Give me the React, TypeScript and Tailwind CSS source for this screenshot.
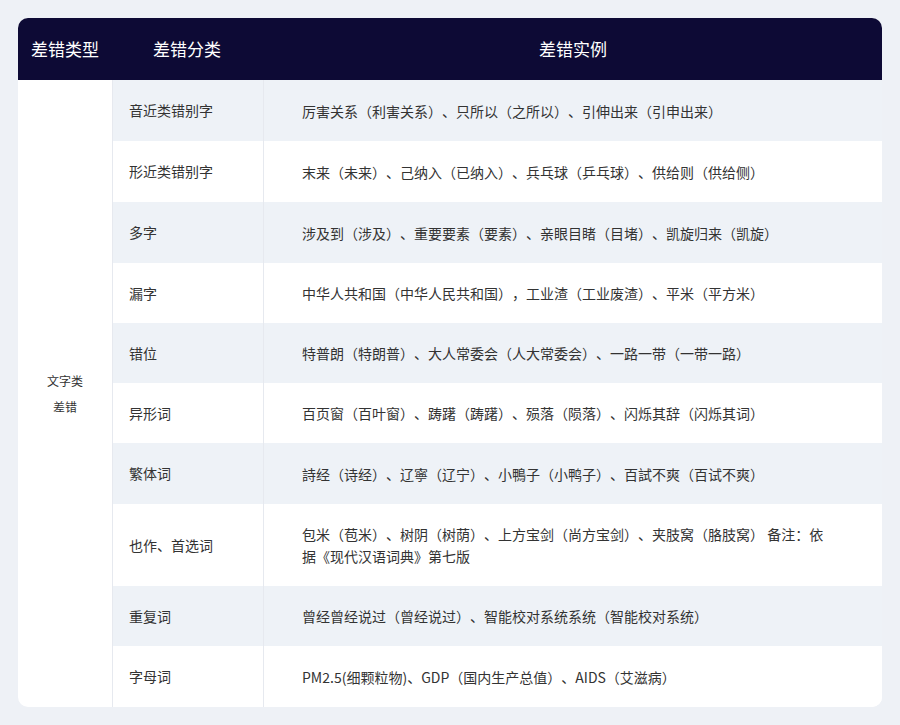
const rows: [string, string, string][] = [
  ["音近类错别字", "厉害关系（利害关系）、只所以（之所以）、引伸出来（引申出来）", "h-[61px]"],
  ["形近类错别字", "末来（未来）、己纳入（已纳入）、兵乓球（乒乓球）、供给则（供给侧）", "h-[61px]"],
  ["多字", "涉及到（涉及）、重要要素（要素）、亲眼目睹（目堵）、凯旋归来（凯旋）", "h-[61px]"],
  ["漏字", "中华人共和国（中华人民共和国），工业渣（工业废渣）、平米（平方米）", "h-[60px]"],
  ["错位", "特普朗（特朗普）、大人常委会（人大常委会）、一路一带（一带一路）", "h-[60px]"],
  ["异形词", "百页窗（百叶窗）、踌躇（踌躇）、殒落（陨落）、闪烁其辞（闪烁其词）", "h-[60px]"],
  ["繁体词", "詩经（诗经）、辽寧（辽宁）、小鴨子（小鸭子）、百試不爽（百试不爽）", "h-[61px]"],
  ["也作、首选词", "包米（苞米）、树阴（树荫）、上方宝剑（尚方宝剑）、夹肢窝（胳肢窝） 备注：依据《现代汉语词典》第七版", "h-[82px]"],
  ["重复词", "曾经曾经说过（曾经说过）、智能校对系统系统（智能校对系统）", "h-[60px]"],
  ["字母词", "PM2.5(细颗粒物)、GDP（国内生产总值）、AIDS（艾滋病）", "h-[61px]"],
];

export default function App() {
  return (
    <div className="min-h-[725px] bg-[#eef1f6] p-[18px] [text-spacing-trim:space-all] [font-feature-settings:'palt'_0]" style={{ fontFamily: '"Noto Sans CJK SC", "Noto Sans", sans-serif' }}>
      <div className="w-[864px] overflow-hidden rounded-[10px] bg-white">
        <div className="flex h-[62px] items-center bg-[#0d0a35] text-[17px] text-white">
          <div className="w-[94px] pl-[13px]">差错类型</div>
          <div className="w-[152px] pl-[41px]">差错分类</div>
          <div className="flex-1 text-center">差错实例</div>
        </div>
        <div className="flex">
          <div className="flex w-[94px] flex-col items-center justify-center text-[12px] leading-[26px] text-[#333]">
            <div>文字类</div>
            <div>差错</div>
          </div>
          <div className="flex-1">
            {rows.map(([a, b, h], i) => (
              <div key={a} className={`flex ${h} text-[14px] text-[#333] ${i % 2 === 0 ? "bg-[#eef2f7]" : "bg-white"}`}>
                <div className="flex w-[152px] items-center border-x border-[#e6e9ef] pl-4">{a}</div>
                <div className="flex flex-1 items-center pl-[38px] pr-[52px] leading-[22px]">{b}</div>
              </div>
            ))}
          </div>
        </div>
      </div>
    </div>
  );
}
